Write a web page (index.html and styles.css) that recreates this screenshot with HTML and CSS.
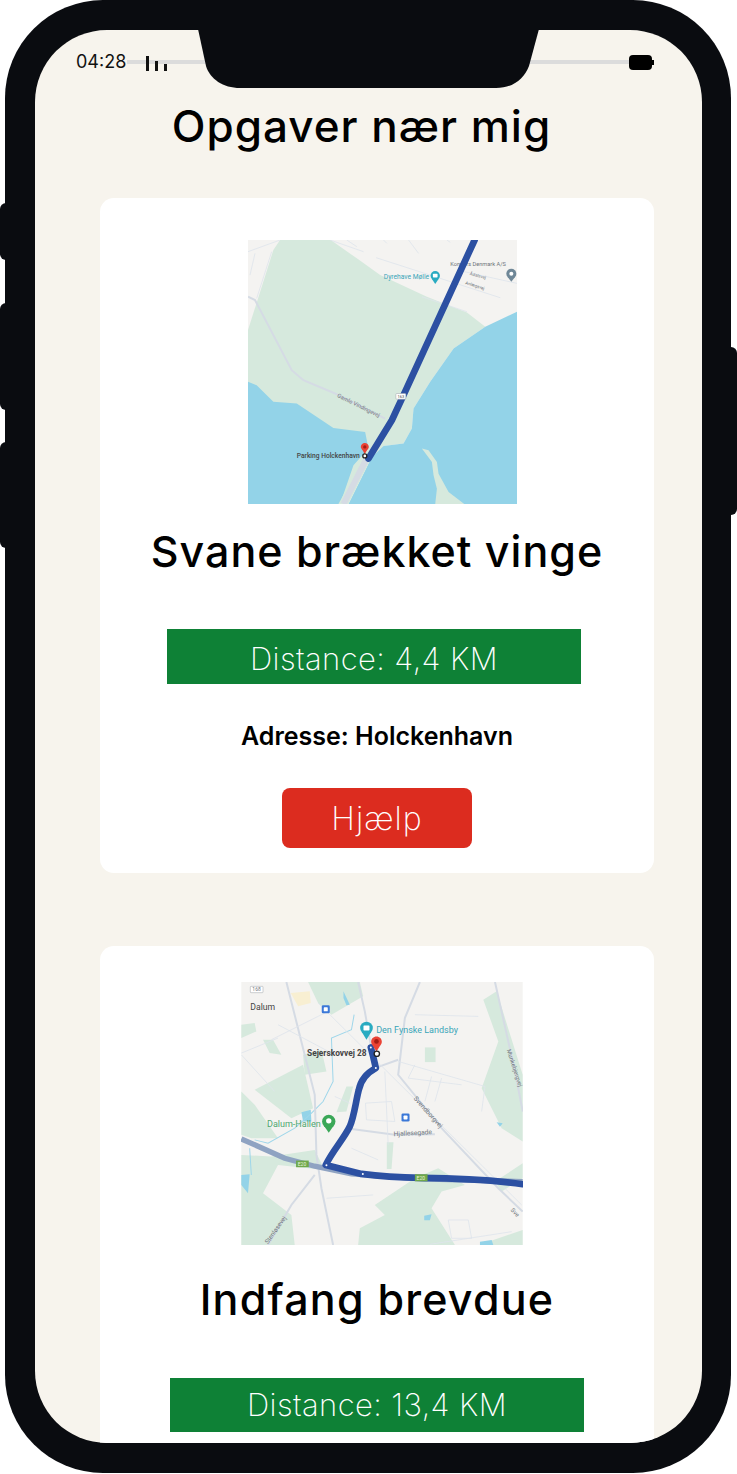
FILE: index.html
```html
<!DOCTYPE html>
<html lang="da">
<head>
    <meta charset="UTF-8">
    <meta name="viewport" content="width=device-width, initial-scale=1.0">
    <title>Opgaver nær mig</title>
    <link rel="stylesheet" href="styles.css">
</head>
<body>
    <div class="phone">
        <span class="side-btn btn-a"></span>
        <span class="side-btn btn-b"></span>
        <span class="side-btn btn-c"></span>
        <span class="side-btn btn-d"></span>

        <svg class="notch" viewBox="0 0 342 60"><path d="M0 0L8 37C12 50 25 59 42 59L298 59C315 59 326 50 331 37L341 0Z"/></svg>

        <div class="screen">
            <div class="status">
                <span class="time">04:28</span>
                <div class="track">
                    <div class="signal"><i class="s1"></i><i class="s2"></i><i class="s3"></i></div>
                </div>
                <span class="battery"></span>
            </div>

            <h1 class="page-title">Opgaver nær mig</h1>

            <div class="card card-first">
                <svg class="map map-one" viewBox="24 15 806 791">
                    <rect class="land" x="24" y="15" width="806" height="791"/>
                    <path class="park" d="M24 285L100 45L120 15L272 15L350 70L420 120L560 185L680 232L735 275L640 340L570 440L520 520L515 580L490 625L430 632L395 665L320 806L300 806L24 806Z"/>
                    <path class="water" d="M830 230L735 275L640 340L570 440L520 520L515 580L490 625L430 632L395 665L325 806L830 806Z"/>
                    <path class="water" d="M24 440L50 450L100 500L170 505L280 578L375 590L385 640L340 690L300 806L24 806Z"/>
                    <path class="park" d="M545 640L565 645L590 680L595 715L625 770L672 806L585 806L590 760L580 720L575 680Z"/>
                    <path class="park" d="M385 640L395 665L325 806L295 806Z"/>
                    <path class="road-wide" d="M378 672L310 806"/>
                    <path class="road" d="M24 185L45 195L155 405L190 435L285 475L435 550"/>
                    <path class="road-thin" d="M270 15L370 50M320 15L350 35M505 15L535 55M430 15L440 25M620 15L630 22M408 68L780 188M545 185L680 230M650 105L830 145M24 50L120 15M45 55L30 120M95 50L50 190"/>
                    <text class="lbl teal" x="431" y="132" font-size="20">Dyrehave Mølle</text>
                    <text class="lbl grey" x="630" y="92" font-size="17">Kongers Denmark A/S</text>
                    <text class="lbl grey" x="688" y="120" font-size="13" transform="rotate(14 688 120)">Ådalsvej</text>
                    <text class="lbl grey" x="674" y="147" font-size="13" transform="rotate(17 674 147)">Anlægsvej</text>
                    <text class="lbl grey" x="290" y="485" font-size="17" transform="rotate(26 290 485)">Gamle Vindingevej</text>
                    <text class="lbl dark medium" x="170" y="667" font-size="20">Parking Holckenhavn</text>
                    <circle class="pin-teal" cx="585" cy="122" r="14"/><path class="pin-teal" d="M575 132L585 147L595 132Z"/>
                    <rect class="pin-hole" x="578" y="116" width="14" height="11" rx="2"/>
                    <circle class="pin-grey" cx="813" cy="116" r="15"/><path class="pin-grey" d="M802 126L813 140L824 126Z"/>
                    <circle class="pin-hole" cx="813" cy="116" r="6"/>
                    <path class="route route-thick" d="M385 670L455 555L490 480L703 15"/>
                    <rect class="shield" x="467" y="475" width="30" height="17" rx="3"/>
                    <text class="lbl dark" x="472" y="488" font-size="12">163</text>
                    <path class="pin-red" d="M374 656C366 642 362 638 362 635C362 628 367 623 374 623C381 623 386 628 386 635C386 638 382 642 374 656Z"/>
                    <circle class="pin-dot" cx="374" cy="635" r="5"/>
                    <circle class="pin-target" cx="374" cy="662" r="6"/>
                </svg>
                <h2 class="task-title">Svane brækket vinge</h2>
                <div class="distance distance-first">Distance: 4,4 KM</div>
                <p class="address">Adresse: Holckenhavn</p>
                <button class="help-btn">Hjælp</button>
            </div>

            <div class="card card-second">
                <svg class="map map-two" viewBox="20 22 843 788">
                    <rect class="land" x="20" y="22" width="843" height="788"/>
                    <path class="park" d="M220 22L375 22L385 65L290 120L250 85Z"/>
                    <path class="park" d="M20 150L60 145L65 170L20 190ZM85 195L115 195L140 240L105 235ZM205 240L260 225L275 290L210 300Z"/>
                    <path class="park" d="M20 350L60 390L130 490L50 490L20 480Z"/>
                    <path class="park" d="M60 345L205 270L235 400L170 430Z"/>
                    <path class="park" d="M335 335L355 335L335 410L305 412Z"/>
                    <path class="park" d="M570 218L602 218L602 262L570 262Z"/>
                    <path class="park" d="M745 75L785 50L863 300L863 500L800 460L740 340L790 200Z"/>
                    <path class="park" d="M456 502L476 502L470 582L456 582Z"/>
                    <path class="park" d="M110 545L240 525L270 585L130 570L85 655L170 720L180 810L20 810L20 540Z"/>
                    <path class="park" d="M420 690L540 610L610 580L690 630L620 650L590 700L660 810L370 810L375 760L450 720Z"/>
                    <path class="park" d="M780 620L863 565L863 610L800 650ZM760 800L863 765L863 810L740 810Z"/>
                    <path class="water" d="M326 50L345 90L335 92L326 70ZM200 412L228 405L230 440L205 440ZM20 600L45 598L40 655L20 630ZM785 442L803 445L795 456ZM568 722L590 718L585 736L568 736ZM735 800L770 795L775 810L735 810Z"/>
                    <path class="sand" d="M168 55L225 50L228 85L190 95Z"/>
                    <path class="stream" d="M358 120L350 165L290 190L295 320L265 380L225 420L180 460L100 505L60 495M45 520L50 600"/>
                    <path class="road" d="M155 22L240 360L245 540L260 640L295 810M555 22L510 130L490 300L620 460L790 640L863 710M780 22L840 290L863 410M370 22L390 110L420 280"/>
                    <path class="road" d="M420 280L490 255M240 600L170 690L100 810M345 462L480 480L600 478"/>
                    <path class="road-thin" d="M20 235L130 190M110 195L290 105M20 240L120 350M130 150L300 240M250 85L860 690M540 120L730 125M490 260L750 335M750 335L740 410M540 270L520 310L680 330M590 305L570 380M620 310L600 380M392 385L470 380L480 440L395 435ZM450 290L460 510M275 670L415 660M640 735L700 735L710 790L650 790ZM585 808L830 770M300 365L345 385M350 520L430 555"/>
                    <path class="highway" d="M20 492L150 550L240 574L350 597L560 612L863 620"/>
                    <text class="lbl dark" x="47" y="107" font-size="26">Dalum</text>
                    <rect class="shield" x="47" y="35" width="38" height="19" rx="2"/>
                    <text class="lbl grey" x="53" y="50" font-size="15">168</text>
                    <rect class="transit" x="261" y="92" width="24" height="24" rx="4"/>
                    <rect class="transit" x="500" y="416" width="24" height="24" rx="4"/>
                    <rect class="pin-hole" x="267" y="98" width="12" height="12" rx="2"/>
                    <rect class="pin-hole" x="506" y="422" width="12" height="12" rx="2"/>
                    <circle class="pin-teal" cx="395" cy="160" r="19"/><path class="pin-teal" d="M381 172L395 195L409 172Z"/>
                    <rect class="pin-hole" x="386" y="152" width="18" height="15" rx="2"/>
                    <text class="lbl teal" x="424" y="175" font-size="27">Den Fynske Landsby</text>
                    <text class="lbl green" x="97" y="456" font-size="27">Dalum-Hallen</text>
                    <circle class="pin-green" cx="282" cy="440" r="20"/><path class="pin-green" d="M267 452L282 474L297 452Z"/>
                    <circle class="pin-hole" cx="282" cy="438" r="8"/>
                    <text class="lbl grey" x="477" y="484" font-size="20" transform="rotate(-3 477 484)">Hjallesegade</text>
                    <text class="lbl grey" x="535" y="372" font-size="20" transform="rotate(48 535 372)">Svendborgvej</text>
                    <text class="lbl grey" x="815" y="226" font-size="18" transform="rotate(72 815 226)">Munkebjergvej</text>
                    <text class="lbl grey" x="826" y="706" font-size="18" transform="rotate(48 826 706)">Sve</text>
                    <text class="lbl grey" x="100" y="808" font-size="19" transform="rotate(-55 100 808)">Stenløsevej</text>
                    <path class="route route-thick" d="M408 218L415 245L423 280C395 295 378 315 372 345C362 385 358 425 345 455C325 495 295 525 273 570L380 597C440 605 500 608 560 609C660 610 770 615 863 628"/>
                    <circle class="route-dot" cx="423" cy="280" r="3"/>
                    <circle class="route-dot" cx="275" cy="571" r="3"/>
                    <circle class="route-dot" cx="384" cy="597" r="3"/>
                    <circle class="route-dot" cx="408" cy="218" r="3"/>
                    <rect class="e-road" x="184" y="557" width="38" height="20"/>
                    <text class="lbl light" x="189" y="572" font-size="15">E20</text>
                    <rect class="e-road" x="540" y="598" width="38" height="21"/>
                    <text class="lbl light" x="545" y="614" font-size="15">E20</text>
                    <text class="lbl dark bold" x="217" y="244" font-size="25">Sejerskovvej 28</text>
                    <path class="pin-red" d="M425 230C414 212 409 208 409 201C409 192 416 185 425 185C434 185 441 192 441 201C441 208 436 212 425 230Z"/>
                    <circle class="pin-dot" cx="425" cy="200" r="7"/>
                    <circle class="pin-target" cx="426" cy="237" r="8"/>
                </svg>
                <h2 class="task-title task-title-second">Indfang brevdue</h2>
                <div class="distance">Distance: 13,4 KM</div>
            </div>
        </div>
    </div>
</body>
</html>
```

FILE: styles.css
```css
html, body { margin: 0; background: #fff; }
body { font-family: Inter, "Liberation Sans", sans-serif; color: #000; overflow: hidden; }

.phone { position: relative; box-sizing: border-box; width: 726px; height: 1473px; margin-left: 5px; padding: 30px 29px 30px 30px; background: #0a0c10; border-radius: 98px; }
.side-btn { position: absolute; background: #0a0c10; width: 8px; }
.btn-a { left: -5px; top: 203px; height: 57px; border-radius: 6px 0 0 6px; }
.btn-b { left: -5px; top: 303px; height: 107px; border-radius: 6px 0 0 6px; }
.btn-c { left: -5px; top: 442px; height: 106px; border-radius: 6px 0 0 6px; }
.btn-d { right: -6px; top: 347px; height: 168px; border-radius: 0 6px 6px 0; }
.notch { position: absolute; left: 193px; top: 29px; width: 342px; height: 60px; fill: #0a0c10; z-index: 2; }

.screen { height: 1413px; background: #f7f4ed; border-radius: 72px; overflow: hidden; }

.status { display: flex; align-items: center; height: 18px; padding: 23px 50px 0 41px; }
.time { width: 51px; font-size: 18px; line-height: 18px; color: #111; }
.track { position: relative; flex: 1; height: 4px; background: #dcdcdc; }
.signal { position: absolute; left: 19px; bottom: -7px; display: flex; align-items: flex-end; gap: 6px; }
.signal i { display: block; width: 3px; background: #111; }
.s1 { height: 15px; }
.s2 { height: 10px; }
.s3 { height: 7px; }
.battery { position: relative; width: 23px; height: 15px; background: #000; border-radius: 4px; }
.battery::after { content: ""; position: absolute; right: -2px; top: 5px; width: 2px; height: 5px; background: #000; }

.page-title { margin: 25px 14px 42px 0; font-size: 44px; line-height: 60px; font-weight: 500; letter-spacing: 1px; text-align: center; }

.card { display: flex; flex-direction: column; align-items: center; width: 554px; margin-left: 65px; background: #fff; border-radius: 14px; }
.card-first { padding: 42px 0 25px; margin-bottom: 73px; }
.card-second { padding: 36px 0 60px; }

.map { display: block; }
.map-one { width: 269px; height: 264px; margin-left: 11px; }
.map-two { width: 282px; height: 263px; margin-left: 10px; }

.task-title { margin: 17px 0 48px; font-size: 43px; line-height: 60px; font-weight: 500; letter-spacing: 1px; }
.task-title-second { margin: 24px 0 49px; letter-spacing: 1.2px; }
.distance { width: 414px; height: 54px; line-height: 54px; background: #0e8136; color: #fff; font-size: 31px; font-weight: 250; letter-spacing: 0.4px; text-align: center; }
.distance-first { margin-right: 6px; height: 55px; line-height: 60px; }
.address { margin: 34px 0; font-size: 25px; line-height: 36px; font-weight: 600; }
.help-btn { width: 190px; height: 60px; background: #dc2c1f; color: #fff; border: none; border-radius: 8px; font-family: inherit; font-size: 32px; font-weight: 250; letter-spacing: 1px; }

/* map parts */
.land { fill: #f4f3f1; }
.park { fill: #d6e9dd; }
.water { fill: #93d3e8; }
.sand { fill: #f8efd2; }
.road { fill: none; stroke: #d5dbe4; stroke-width: 6; }
.road-wide { fill: none; stroke: #d5dbe4; stroke-width: 18; }
.road-thin { fill: none; stroke: #dfe4ec; stroke-width: 2.5; }
.stream { fill: none; stroke: #9ed6ea; stroke-width: 3; }
.highway { fill: none; stroke: #8fa3c2; stroke-width: 16; }
.route { fill: none; stroke: #2c50a2; stroke-width: 15; stroke-linejoin: round; stroke-linecap: round; }
.route-thick { stroke-width: 20; }
.route-dot { fill: #fff; }
.shield { fill: #fff; stroke: #9aa0a6; stroke-width: 1.5; }
.e-road { fill: #6fa84a; }
.transit { fill: #3b78d8; }
.pin-teal { fill: #29abc1; }
.pin-grey { fill: #6f8797; }
.pin-green { fill: #3aa757; }
.pin-hole { fill: #fff; }
.pin-red { fill: #ea4335; }
.pin-dot { fill: #a31d15; }
.pin-target { fill: #fff; stroke: #222; stroke-width: 4; }
.lbl { font-family: Roboto, "Liberation Sans", sans-serif; }
.teal { fill: #39a5b8; }
.grey { fill: #6f757b; }
.dark { fill: #444; }
.green { fill: #4fa870; }
.light { fill: #e8f3dd; }
.medium { font-weight: 500; }
.bold { font-weight: 700; }
```
